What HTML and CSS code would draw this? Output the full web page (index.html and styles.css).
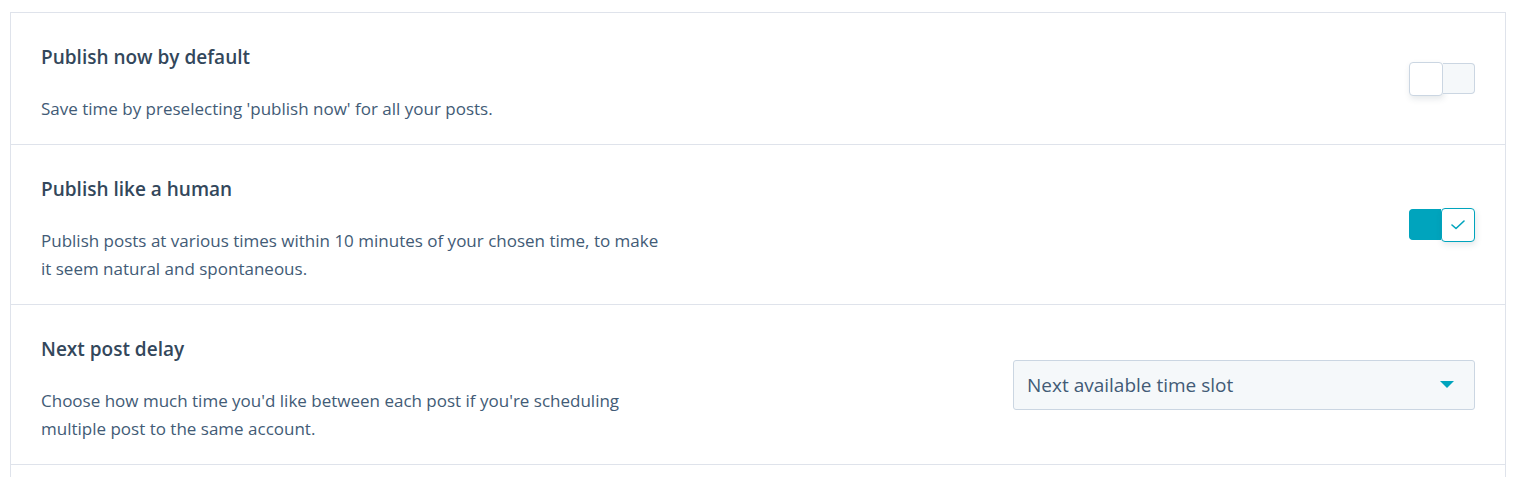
FILE: index.html
```html
<!DOCTYPE html>
<html lang="en">
<head>
    <meta charset="UTF-8">
    <meta name="viewport" content="width=device-width, initial-scale=1.0">
    <title>Publishing settings</title>
    <link rel="stylesheet" href="styles.css">
</head>
<body>
    <div class="settings-card">
        <div class="setting-row">
            <div class="setting-text">
                <h3 class="setting-title">Publish now by default</h3>
                <p class="setting-desc">Save time by preselecting 'publish now' for all your posts.</p>
            </div>
            <div class="toggle">
                <span class="toggle-knob"></span>
                <span class="toggle-track"></span>
            </div>
        </div>
        <div class="setting-row">
            <div class="setting-text">
                <h3 class="setting-title">Publish like a human</h3>
                <p class="setting-desc">Publish posts at various times within 10 minutes of your chosen time, to make it seem natural and spontaneous.</p>
            </div>
            <div class="toggle on">
                <span class="toggle-track"></span>
                <span class="toggle-knob">
                    <svg width="14" height="10" viewBox="0 0 14 10"><path d="M1 5 L5 8.5 L13 1" fill="none" stroke="#00a4bd" stroke-width="1.6" stroke-linecap="round" stroke-linejoin="round"/></svg>
                </span>
            </div>
        </div>
        <div class="setting-row">
            <div class="setting-text">
                <h3 class="setting-title">Next post delay</h3>
                <p class="setting-desc">Choose how much time you'd like between each post if you're scheduling multiple post to the same account.</p>
            </div>
            <div class="dropdown">
                <span>Next available time slot</span>
                <span class="caret"></span>
            </div>
        </div>
        <div class="setting-row empty"></div>
    </div>
</body>
</html>
```

FILE: styles.css
```css
body {
    margin: 0;
    padding: 12px 10px 0;
    background-color: #fff;
    font-family: "Open Sans", "Noto Sans", sans-serif;
    color: #33475b;
}
.settings-card {
    border: 1px solid #dfe3eb;
    border-bottom: none;
}
.setting-row {
    display: flex;
    justify-content: space-between;
    align-items: center;
    padding: 30px 30px 21px;
    border-bottom: 1px solid #dfe3eb;
}
.setting-row.empty {
    height: 40px;
    border-bottom: none;
}
.setting-text {
    max-width: 620px;
}
.setting-title {
    margin: 0;
    font-size: 19px;
    line-height: 28px;
    font-weight: 600;
    color: #33475b;
}
.setting-desc {
    margin: 24px 0 0;
    font-size: 17px;
    line-height: 28px;
    color: #425b76;
}
/* controls sit centred on the whole row, not on the padded box */
.toggle,
.dropdown {
    margin-bottom: 9px;
}
.toggle {
    display: flex;
    align-items: center;
    width: 66px;
    height: 34px;
}
.toggle-track {
    width: 32px;
    height: 31px;
    box-sizing: border-box;
    background-color: #f5f8fa;
    border: 1px solid #cbd6e2;
    border-left: none;
    border-radius: 0 4px 4px 0;
}
.toggle-knob {
    width: 34px;
    height: 34px;
    box-sizing: border-box;
    background-color: #fff;
    border: 1px solid #cbd6e2;
    border-radius: 4px;
    box-shadow: 1px 3px 6px rgba(45, 62, 80, 0.12);
    display: flex;
    justify-content: center;
    align-items: center;
}
.toggle.on .toggle-track {
    background-color: #00a4bd;
    border: 1px solid #00a4bd;
    border-right: none;
    border-radius: 4px 0 0 4px;
}
.toggle.on .toggle-knob {
    border-color: #00a4bd;
}
.dropdown {
    width: 462px;
    height: 50px;
    box-sizing: border-box;
    display: flex;
    justify-content: space-between;
    align-items: center;
    padding: 0 20px 0 13px;
    background-color: #f5f8fa;
    border: 1px solid #cbd6e2;
    border-radius: 3px;
    font-size: 19px;
    color: #425b76;
}
.caret {
    width: 0;
    height: 0;
    border-left: 7px solid transparent;
    border-right: 7px solid transparent;
    border-top: 7px solid #00a4bd;
}
```
